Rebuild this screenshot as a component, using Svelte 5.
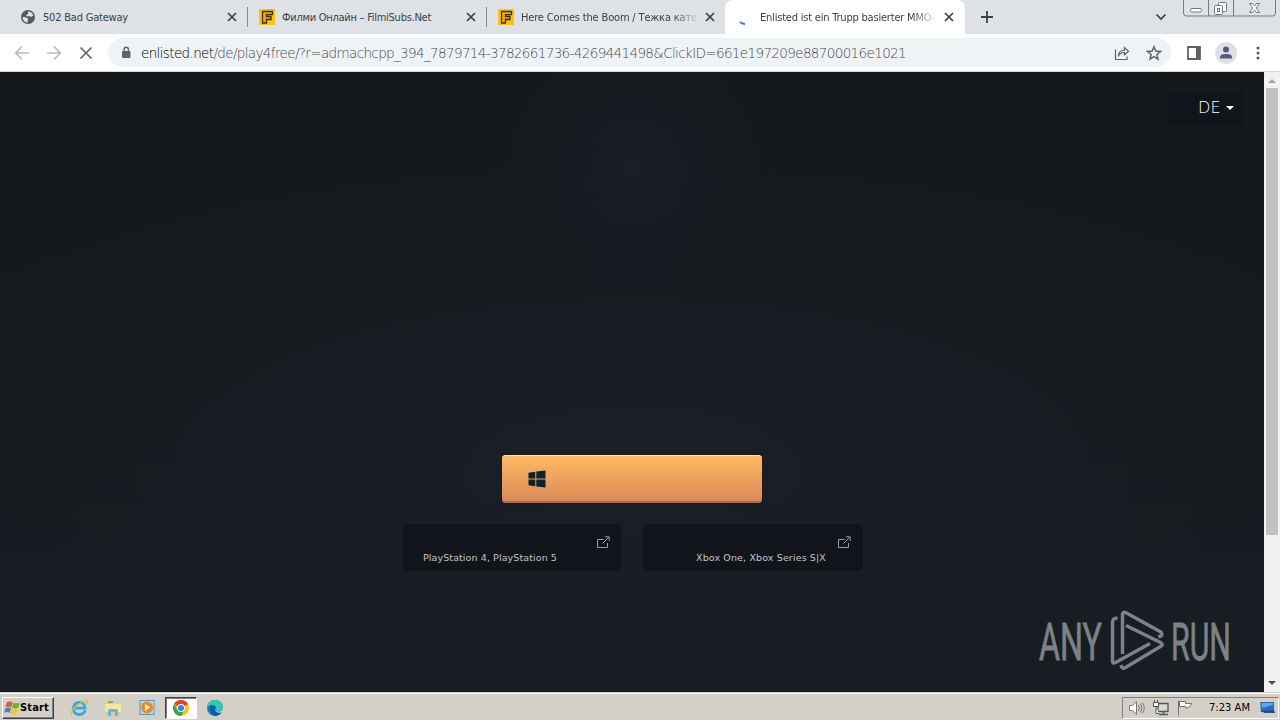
<script>
  const tabs = [
    { title: '502 Bad Gateway', icon: 'globe', width: 85 },
    { title: 'Филми Онлайн – FilmiSubs.Net', icon: 'film', width: 149 },
    { title: 'Here Comes the Boom / Тежка кате', icon: 'film', width: 176 },
    { title: 'Enlisted ist ein Trupp basierter MMO-', icon: 'loading', width: 175, active: true }
  ];

  const stores = [
    { label: 'PlayStation 4, PlayStation 5', width: 134, kind: 'playstation' },
    { label: 'Xbox One, Xbox Series S|X', width: 130, kind: 'xbox' }
  ];

  // Spread the letters of a label so that it takes the given width
  function fit(node, width) {
    const natural = node.getBoundingClientRect().width;
    node.style.letterSpacing = `${(width - natural) / node.textContent.length}px`;
  }
</script>

<div class="screen">
  <header class="tabstrip">
    {#each tabs as tab}
      <div class="tab" class:active={tab.active}>
        <span class="favicon">
          {#if tab.icon === 'globe'}
            <svg width="16" height="16" viewBox="0 0 16 16">
              <circle cx="8" cy="8" r="7" fill="#54585d" />
              <path d="M2.500 8q3-.5 4.500 1l1.500 1-1 1.500.5 2Q3 13.500 2.500 8zM8 2.500q4 .2 5.300 4L11 8 9.500 7 7 7.500 6 6l2-1z" fill="#dee1e6" />
            </svg>
          {:else if tab.icon === 'film'}
            <svg width="16" height="16" viewBox="0 0 16 16">
              <rect width="16" height="16" fill="#fbc316" />
              <path d="M3.500 2.500h10v3.200H7.500v1.800h4.500v3H7.500v3.500h-4z" fill="#e5ad15" stroke="#44310c" stroke-width="1.300" />
            </svg>
          {:else}
            <svg width="16" height="16" viewBox="0 0 16 16">
              <path d="M3 13q2 1.700 5 2" fill="none" stroke="#3c78d8" stroke-width="2" />
            </svg>
          {/if}
        </span>
        <span class="tab-title"><span use:fit={tab.width}>{tab.title}</span></span>
        <svg class="close" width="10" height="10" viewBox="0 0 10 10">
          <path d="M1 1l8 8M9 1l-8 8" stroke="#3c4043" stroke-width="1.700" />
        </svg>
      </div>
    {/each}
    <svg class="new-tab" width="12" height="12" viewBox="0 0 12 12">
      <path d="M6 0v12M0 6h12" stroke="#3c4043" stroke-width="1.800" />
    </svg>
    <svg class="tab-search" width="12" height="8" viewBox="0 0 12 8">
      <path d="M1.500 1.500l4.500 4.500 4.500-4.500" fill="none" stroke="#3c4043" stroke-width="1.700" />
    </svg>
    <div class="window-buttons">
      <svg width="94" height="18" viewBox="0 0 94 18" fill="none" stroke="#75787d">
        <path d="M.5 0v13q0 3 3 3h86q3 0 3-3V0M25.500 0v16M50.500 0v16" />
        <rect x="7.500" y="8.500" width="11" height="3.500" rx="1.500" fill="#fff" />
        <rect x="35.500" y="2.500" width="8" height="9" rx="1" fill="#fff" />
        <rect x="31.500" y="5.500" width="8" height="9" rx="1" fill="#fff" />
        <rect x="34.500" y="8.500" width="2" height="3" />
        <path d="M66.500 3.500h3l2 2.500 2-2.500h3l-3.200 4.500 3.200 4.500h-3l-2-2.500-2 2.500h-3l3.200-4.500z" fill="#fff" />
      </svg>
    </div>
  </header>

  <nav class="toolbar">
    <svg class="nav-icon" width="16" height="16" viewBox="0 0 16 16" fill="none" stroke="#b7b9bc" stroke-width="1.600">
      <path d="M15 8H2M8 1.500L1.700 8 8 14.500" />
    </svg>
    <svg class="nav-icon" width="16" height="16" viewBox="0 0 16 16" fill="none" stroke="#b7b9bc" stroke-width="1.600">
      <path d="M1 8h13M8 1.500L14.300 8 8 14.500" />
    </svg>
    <svg class="nav-icon" width="16" height="16" viewBox="0 0 16 16" fill="none" stroke="#5f6368" stroke-width="1.700">
      <path d="M2.500 2.500l11 11M13.500 2.500l-11 11" />
    </svg>
    <div class="address">
      <svg width="10" height="13" viewBox="0 0 10 13">
        <rect x="1" y="5" width="8.500" height="7" rx="1" fill="#5f6368" />
        <path d="M3 5.500V3.500q0-2.300 2.200-2.300t2.200 2.300v2" fill="none" stroke="#5f6368" stroke-width="1.400" />
      </svg>
      <span class="url" use:fit={765}><b>enlisted.net</b>/de/play4free/?r=admachcpp_394_7879714-3782661736-4269441498&amp;ClickID=661e197209e88700016e1021</span>
      <svg class="share" width="16" height="16" viewBox="0 0 16 16" fill="none" stroke="#5f6368" stroke-width="1.200">
        <path d="M1.500 4.500v10h11.500v-3M4.500 10.500q0-5 6-5V2.500l4 3.700-4 3.600V7.500q-4 0-6 3z" />
      </svg>
      <svg width="16" height="16" viewBox="0 0 16 16" fill="none" stroke="#5f6368" stroke-width="1.500">
        <path d="M8 1.800l1.800 4.300 4.700.4-3.600 3 1.100 4.600L8 11.700l-4 2.400 1.100-4.600-3.600-3 4.700-.4z" />
      </svg>
    </div>
    <svg class="panel" width="14" height="14" viewBox="0 0 14 14">
      <path d="M1 1h12v12H1z" fill="#fff" stroke="#5f6368" stroke-width="1.800" />
      <path d="M9 1h4v12H9z" fill="#5f6368" />
    </svg>
    <svg class="profile" width="22" height="22" viewBox="0 0 22 22">
      <circle cx="11" cy="11" r="11" fill="#dde0e5" />
      <circle cx="11" cy="7.500" r="3" fill="#515b7c" />
      <path d="M5 16.500v-1.500q0-3 6-3t6 3v1.500z" fill="#515b7c" />
    </svg>
    <svg class="menu" width="4" height="14" viewBox="0 0 4 14" fill="#54585d">
      <circle cx="2" cy="2" r="1.500" /><circle cx="2" cy="7" r="1.500" /><circle cx="2" cy="12" r="1.500" />
    </svg>
  </nav>

  <div class="viewport">
    <main class="page">
      <button class="language"><span use:fit={23}>DE</span><i></i></button>
      <div class="actions">
        <button class="play" aria-label="Windows">
          <svg width="18" height="18" viewBox="0 0 18 18" fill="#122027">
            <path d="M.5 2.700l6.800-1v6.800H.5zM8.300 1.500L17.500.5v8H8.300zM.5 9.500h6.800v6.800l-6.800-1zM8.300 9.500h9.200v8l-9.200-1z" />
          </svg>
        </button>
        <div class="stores">
          {#each stores as store}
            <div class="store {store.kind}">
              <span class="store-label"><span use:fit={store.width}>{store.label}</span></span>
              <svg class="external" width="13" height="13" viewBox="0 0 13 13" fill="none" stroke="#9a9da2">
                <path d="M6.500 3.500h-6v8h10V7M5.500 7.500l6-6M8 .8h4.200V5" />
              </svg>
            </div>
          {/each}
        </div>
      </div>
      <svg class="watermark" width="200" height="66" viewBox="0 0 200 66">
        <text x="1" y="50.500" textLength="63" lengthAdjust="spacingAndGlyphs">ANY</text>
        <g fill="none" stroke="#7e8286" stroke-width="3.500" stroke-linejoin="round">
          <path d="M79.500 9.500q-5-1-5 4V52q0 3 3 1.500L112 34.500" />
          <path d="M84.500 45V6q0-4 3.500-2.200l34 18.700q3 2 1.200 4.500l-3 .7" />
          <path d="M88 16.500l34.500 17q3.500 2 0 4L87 58.800q-3 1.500-4-2.800" />
        </g>
        <text x="133" y="50.500" textLength="60" lengthAdjust="spacingAndGlyphs">RUN</text>
      </svg>
    </main>
    <aside class="scrollbar">
      <i class="up"></i>
      <div class="thumb"></div>
      <i class="down"></i>
    </aside>
  </div>

  <footer class="taskbar">
    <button class="start">
      <svg width="16" height="16" viewBox="0 0 17 16">
        <path d="M3 2q3-2 6.200 0L7.700 7.500Q5 5.700 1.700 7.300z" fill="#e85b25" />
        <path d="M9.800 2.300q3 1.500 7 0l-1.600 5.500q-3 1.600-6.600 0z" fill="#73ae2b" />
        <path d="M1.500 8.200q3-1.700 6 0L6 13.200Q3.500 11.500 0 13.100z" fill="#3c86d9" />
        <path d="M8.200 8.600q3 1.500 6.700 0L13.400 14q-3 1.500-6.600 0z" fill="#f4c423" />
      </svg>
      <span use:fit={29}>Start</span>
    </button>
    <div class="task">
      <svg width="18" height="18" viewBox="0 0 18 18" fill="none">
        <path d="M15.500 11.500Q13 15.800 8.800 15.500 3.500 15 3.500 9.500T9 3.500t6 5.700H5" stroke="#39a9e4" stroke-width="2.800" />
        <path d="M2 16Q-1 14 6 7.500T17 2q1 2-1.500 4" stroke="#e4b93c" stroke-width="1.300" />
      </svg>
    </div>
    <div class="task">
      <svg width="18" height="18" viewBox="0 0 18 18">
        <path d="M2 3h5l1 2h8v11H2z" fill="#e9c963" />
        <path d="M4 2h5v2H4z" fill="#75b957" />
        <path d="M1 5h16v8H1z" fill="#f8e6a0" />
        <path d="M4 17v-5q0-2 2-2h6q2 0 2 2v5h-3v-4H7v4z" fill="#68b5df" />
      </svg>
    </div>
    <div class="task">
      <svg width="18" height="18" viewBox="0 0 18 18">
        <rect x="2" y="1.500" width="14" height="14" fill="#b9d9f0" stroke="#5598cc" />
        <circle cx="9" cy="8.500" r="6" fill="#f18a1c" />
        <path d="M7 5l5 3.500L7 12z" fill="#fff" />
      </svg>
    </div>
    <div class="task pressed">
      <svg width="16" height="16" viewBox="0 0 16 16">
        <circle cx="8" cy="8" r="8" fill="#fbc116" />
        <path d="M8 8L1.100 4A8 8 0 0 1 14.900 4z" fill="#e33b2e" />
        <path d="M1.100 4A8 8 0 0 0 8 16l3.500-6H4.500z" fill="#2da94f" />
        <circle cx="8" cy="8" r="3.900" fill="#fff" />
        <circle cx="8" cy="8" r="3" fill="#377de5" />
      </svg>
    </div>
    <div class="task">
      <svg width="18" height="18" viewBox="0 0 18 18">
        <circle cx="9" cy="9" r="8" fill="#167ac6" />
        <path d="M1 9Q1 1 9 1t8 7q0 4-4 4-4 0-3-3Q8 5 4 6 2 7 1 9z" fill="#36c5b5" />
        <path d="M4 8q4-3 6 .5-2 3 1 4.500 3 1 5-.5Q13 17 9 16.800 4 15 4 8z" fill="#0b5dad" />
        <path d="M9.500 8.500q-1 4 3.500 4 3 0 4-3v3q-2 2-5 1-4-1-2.500-5z" fill="#d4d0c8" />
      </svg>
    </div>
    <div class="tray">
      <svg width="18" height="18" viewBox="0 0 18 18" fill="none" stroke="#77787a">
        <path d="M1.500 6.500h3l4-4v13l-4-4h-3z" fill="#fff" />
        <path d="M10.500 6q2 3 0 6M12.500 4.500q3 4.500 0 9M14.500 3.500q3.500 5.500 0 11" />
      </svg>
      <svg width="18" height="18" viewBox="0 0 18 18" fill="none" stroke="#555658">
        <path d="M6 4.500h10v8H6zM7 15.500h9M11.500 13v2" fill="#d8d8d8" stroke-width="1.300" />
        <path d="M1.500 3.500h5v4h-5zM2.500 1v3M5.500 1v3M4 7.500v7h3" fill="#fff" />
      </svg>
      <svg width="18" height="18" viewBox="0 0 18 18" fill="#fff" stroke="#707174">
        <path d="M2.500 1.500v15M3.500 2.500h6v2h6l-1.500 3-4 2v-2H3.500z" />
      </svg>
      <time><span use:fit={41}>7:23 AM</span></time>
      <svg class="desktop" width="17" height="15" viewBox="0 0 17 15">
        <path d="M1 2h14v9l-13 1z" fill="#286bbf" />
        <path d="M2 3h12v2L3 8z" fill="#5ba5e5" />
        <path d="M1 11l14-1 1 3H6z" fill="#24488c" />
      </svg>
    </div>
  </footer>
</div>

<style>
  :global(body) {
    margin: 0;
    overflow: hidden;
  }
  .screen {
    width: 1280px;
    height: 720px;
    display: flex;
    flex-direction: column;
    font-family: "DejaVu Sans Condensed", "DejaVu Sans", sans-serif;
    font-size: 11px;
    background: #fff;
  }
  svg {
    display: block;
    flex: none;
  }
  button {
    font: inherit;
    border: 0;
    padding: 0;
    margin: 0;
  }
  .tabstrip {
    height: 34px;
    display: flex;
    align-items: center;
    background: #dee1e6;
    padding-left: 9px;
    box-sizing: border-box;
    flex: none;
  }
  .tab {
    width: 239px;
    height: 34px;
    box-sizing: border-box;
    padding: 0 11px 0 11px;
    display: flex;
    align-items: center;
    color: #3c4043;
    flex: none;
    background: linear-gradient(#85888e, #85888e) right center / 1px 20px no-repeat;
  }
  .tab:nth-child(3) {
    width: 238px;
    padding-right: 10px;
    background: none;
  }
  .tab.active {
    width: 240px;
    background: #fff;
    border-radius: 8px 8px 0 0;
    padding-left: 12px;
    padding-right: 11px;
  }
  .favicon {
    width: 23px;
  }
  .tab-title {
    flex: 1;
    white-space: nowrap;
    overflow: hidden;
    line-height: 18px;
    padding-top: 1px;
  }
  .tab:nth-child(n+3) .tab-title {
    -webkit-mask-image: linear-gradient(90deg, #000 152px, transparent 178px);
    mask-image: linear-gradient(90deg, #000 152px, transparent 178px);
  }
  .new-tab {
    margin-left: 16px;
  }
  .tab-search {
    margin-left: auto;
  }
  .window-buttons {
    align-self: flex-start;
    margin-left: 16px;
    margin-right: 3px;
  }
  .toolbar {
    height: 38px;
    box-sizing: border-box;
    border-bottom: 1px solid #d5d8dc;
    display: flex;
    align-items: center;
    padding-left: 14px;
    flex: none;
  }
  .nav-icon {
    margin-right: 16px;
  }
  .address {
    width: 1063px;
    height: 29px;
    margin-left: -2px;
    border-radius: 15px;
    background: #f0f3f5;
    display: flex;
    align-items: center;
    padding: 0 9px 0 13px;
    box-sizing: border-box;
  }
  .url {
    margin-left: 10px;
    color: #45494e;
    font-family: "DejaVu Sans Light", "DejaVu Sans", sans-serif;
    font-weight: 200;
    font-size: 13.5px;
    white-space: nowrap;
  }
  .url b {
    font-weight: 200;
    color: #000;
  }
  .share {
    margin-left: auto;
    margin-right: 16px;
  }
  .panel {
    margin-left: 16px;
  }
  .profile {
    margin-left: 14px;
  }
  .menu {
    margin-left: 19px;
  }
  .viewport {
    height: 620px;
    display: flex;
    flex: none;
  }
  .page {
    width: 1264px;
    position: relative;
    display: flex;
    flex-direction: column;
    align-items: center;
    background:
      radial-gradient(circle at 634px 95px, #1a1e27 0, rgba(24, 28, 36, 0.7) 50px, transparent 130px),
      radial-gradient(ellipse 850px 320px at 632px 400px, #1a1f25 0, #191d24 35%, rgba(24, 28, 34, 0.5) 65%, transparent 100%),
      linear-gradient(#15191b 0, #15191b 60%, #191d24 88%);
  }
  .language {
    align-self: flex-end;
    margin: 20px 20px 0 0;
    width: 76px;
    height: 33px;
    border-radius: 4px;
    background: #10141b;
    color: #fff;
    font-size: 16px;
    font-family: "DejaVu Sans Light", "DejaVu Sans", sans-serif;
    font-weight: 200;
    display: flex;
    align-items: center;
    justify-content: flex-end;
    padding: 0 10px 2px 0;
    gap: 5px;
  }
  .language i {
    border: 4px solid transparent;
    border-top-color: #fff;
    border-bottom: 0;
  }
  .actions {
    margin-top: 330px;
    display: flex;
    flex-direction: column;
    align-items: center;
    gap: 21px;
  }
  .play {
    width: 260px;
    height: 48px;
    border-radius: 4px;
    background: linear-gradient(#ffba64, #da8858);
    box-shadow: inset 0 1px #ffe4b9, inset 0 -2px #ad6b4c, 0 0 2px #25170d;
    padding-left: 26px;
  }
  .stores {
    display: flex;
    gap: 20px;
    margin-left: 1px;
  }
  .store {
    width: 220px;
    height: 47px;
    border-radius: 6px;
    background: #11141b;
    color: #c2c4c8;
    font-family: "DejaVu Sans", sans-serif;
    font-size: 9.5px;
    display: flex;
    align-items: flex-start;
    box-sizing: border-box;
    padding: 12px 12px 0 21px;
  }
  .store + .store {
    margin-left: 1px;
  }
  .store-label {
    white-space: nowrap;
    margin-top: 15px;
    line-height: 14px;
  }
  .xbox .store-label {
    margin-left: 32px;
  }
  .external {
    margin-left: auto;
  }
  .watermark {
    position: absolute;
    right: 26px;
    bottom: 17px;
  }
  .watermark text {
    fill: #7e8286;
    stroke: #7e8286;
    stroke-width: 0.8px;
    font-family: "Roboto", sans-serif;
    font-size: 52px;
    font-weight: 400;
  }
  .scrollbar {
    width: 16px;
    background: #f1f1f1;
    display: flex;
    flex-direction: column;
    align-items: center;
  }
  .up {
    margin: 7px 0 5px;
    border: 4px solid transparent;
    border-top: 0;
    border-bottom-color: #a3a3a3;
  }
  .thumb {
    width: 12px;
    height: 447px;
    background: #c1c1c1;
  }
  .down {
    margin-top: auto;
    margin-bottom: 7px;
    border: 4px solid transparent;
    border-bottom: 0;
    border-top-color: #505050;
  }
  .taskbar {
    height: 28px;
    box-sizing: border-box;
    background: #d4d0c8;
    border-top: 1px solid #d4d0c8;
    box-shadow: inset 0 1px #fff;
    display: flex;
    align-items: center;
    padding: 2px 1px 0 2px;
  }
  .start {
    width: 52px;
    height: 22px;
    background: #d4d0c8;
    border: 1px solid;
    border-color: #fff #404040 #404040 #fff;
    box-shadow: inset -1px -1px #808080;
    display: flex;
    align-items: center;
    padding-left: 1px;
    margin-right: 9px;
    color: #000;
    font-size: 11px;
    font-weight: bold;
  }
  .task {
    width: 32px;
    height: 22px;
    margin-right: 2px;
    display: flex;
    align-items: center;
    justify-content: center;
    box-sizing: border-box;
  }
  .pressed {
    background: #fff;
    border: 1px solid;
    border-color: #404040 #fff #fff #404040;
    box-shadow: inset 1px 1px #808080;
  }
  .tray {
    width: 157px;
    height: 22px;
    margin-left: auto;
    border: 1px solid;
    border-color: #808080 #fff #fff #808080;
    box-sizing: border-box;
    display: flex;
    align-items: center;
    gap: 6px;
    padding: 0 2px 0 5px;
  }
  .tray time {
    margin-left: 9px;
    white-space: nowrap;
    color: #000;
    width: 41px;
  }
  .desktop {
    margin-left: auto;
  }
</style>
